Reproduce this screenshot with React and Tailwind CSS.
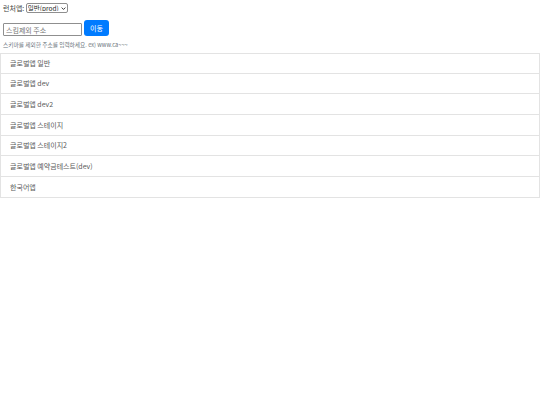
const items = [
  "글로벌앱 일반",
  "글로벌앱 dev",
  "글로벌앱 dev2",
  "글로벌앱 스테이지",
  "글로벌앱 스테이지2",
  "글로벌앱 예약금테스트(dev)",
  "한국어앱",
];

export default function App() {
  return (
    <div className="min-h-[405px] bg-white text-[#444] font-['Noto_Sans_CJK_KR','Liberation_Sans',sans-serif]">
      <div className="flex items-center pl-[3px] pt-[3px] h-[13px] text-[7px] leading-none">
        <span>런처앱:&nbsp;</span>
        <div className="relative">
          <select
            defaultValue="prod"
            className="block h-[10px] w-[42px] appearance-none text-[6.5px] leading-none text-[#222] border border-[#8f8f8f] rounded-[2px] bg-white pl-[1px] pr-[8px] outline-none"
          >
            <option value="prod">일반(prod)</option>
          </select>
          <svg
            viewBox="0 0 8 8"
            className="pointer-events-none absolute right-[2px] top-[3px] w-[5px] h-[5px]"
          >
            <path d="M1 2.5 L4 5.5 L7 2.5" fill="none" stroke="#222" strokeWidth="1.4" />
          </svg>
        </div>
      </div>

      <div className="flex items-end gap-[2px] pl-[3px] pt-[7px]">
        <input
          type="text"
          placeholder="스킴제외 주소"
          className="h-[13px] w-[79px] border border-[#8f8f8f] rounded-[1px] px-[2px] text-[7px] placeholder:text-[#757575] outline-none"
        />
        <button className="h-[16px] w-[25px] rounded-[3px] bg-[#007bff] text-white text-[7px] leading-none">
          이동
        </button>
      </div>

      <p className="pl-[3px] pt-[5px] text-[5.7px] leading-[8px] text-[#6c757d]">
        스키마를 제외한 주소를 입력하세요. ex) www.ca~~~
      </p>

      <ul className="mt-[4px]">
        {items.map((item, i) => (
          <li
            key={item}
            className={`flex items-center h-[20.7px] pl-[9px] text-[7px] text-[#5a5a5a] border-x border-b border-[#e3e3e3] ${
              i === 0 ? "border-t" : ""
            }`}
          >
            {item}
          </li>
        ))}
      </ul>
    </div>
  );
}
